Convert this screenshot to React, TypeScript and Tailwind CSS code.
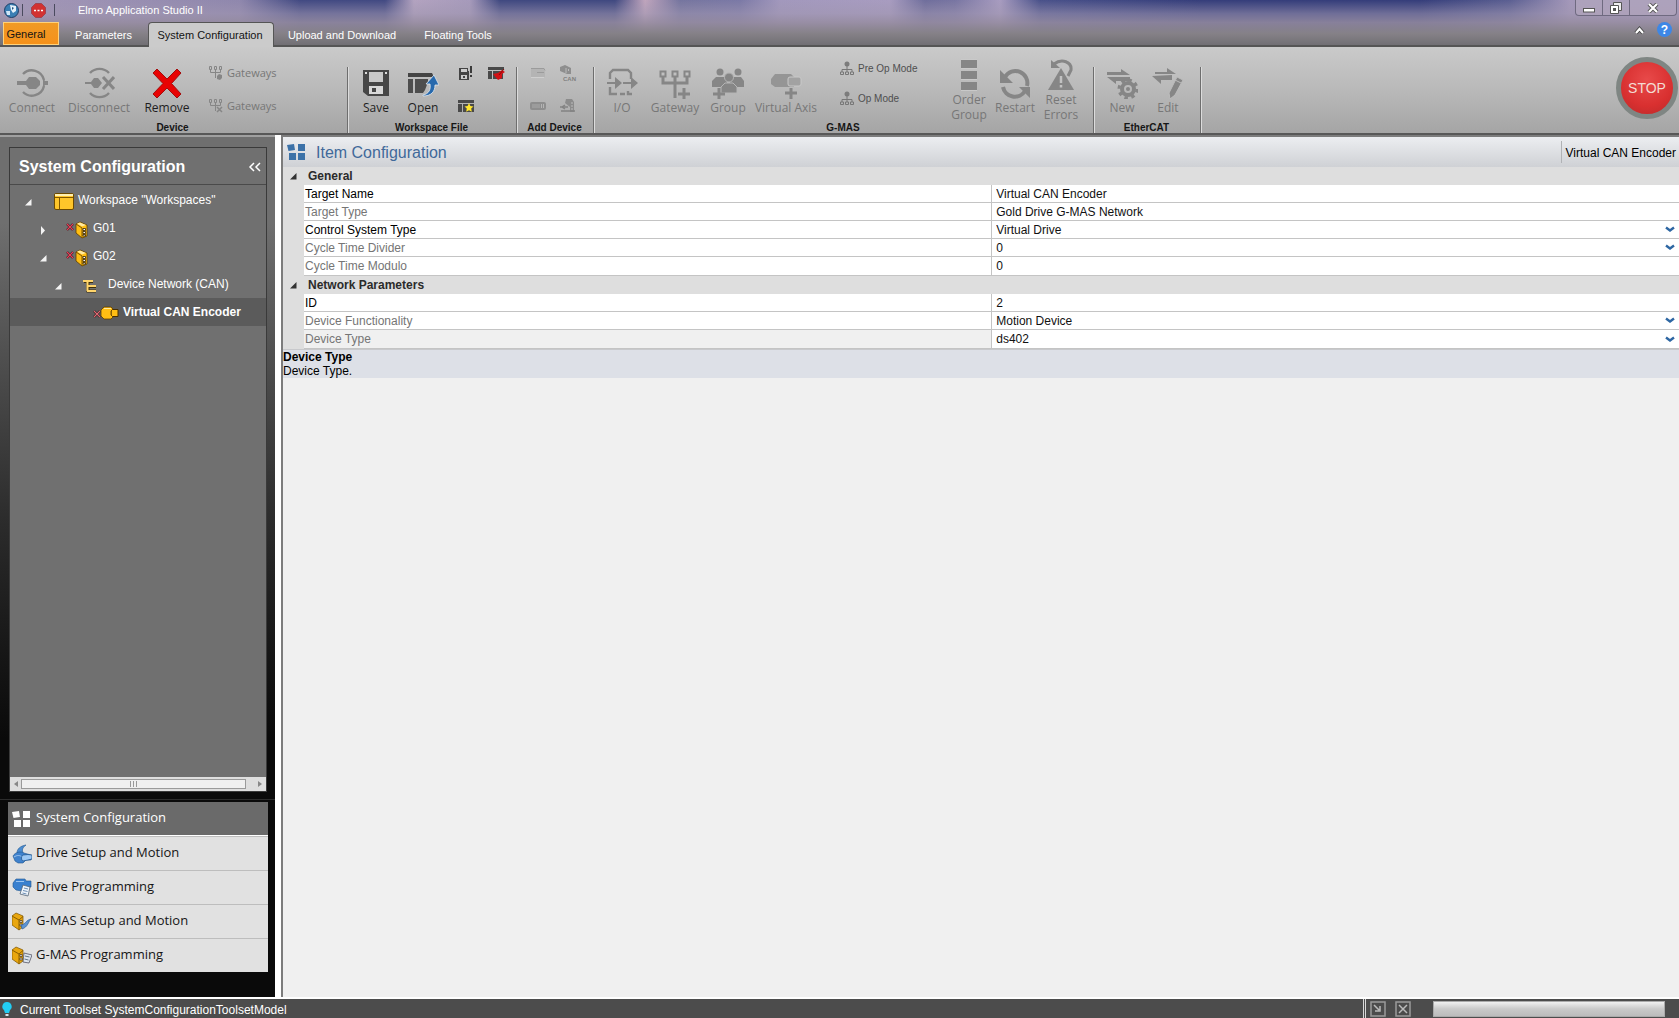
import React from "react";

type IconProps = { children: React.ReactNode; w?: number; h?: number; vb?: string };

const Svg = ({ children, w = 32, h = 32, vb = "0 0 32 32" }: IconProps) => (
  <svg width={w} height={h} viewBox={vb} fill="none" aria-hidden="true" className="shrink-0">
    {children}
  </svg>
);

const G = "#868686";

/* ---------- ribbon icons ---------- */
const ConnectIcon = () => (
  <Svg>
    <path d="M7 7a12.500 12.500 0 0 1 21 6M28 19a12.500 12.500 0 0 1-21 6" stroke={G} strokeWidth="2.4" />
    <path d="M27 10l2 4h3v4h-3l-2 4z" fill={G} />
    <path d="M1 14h9l3-4h7l4 4v4l-4 4h-7l-3-4H1z" fill={G} />
  </Svg>
);
const DisconnectIcon = () => (
  <Svg>
    <path d="M7 6a13 13 0 0 1 19 0M7 26a13 13 0 0 0 19 0" stroke={G} strokeWidth="2.4" />
    <path d="M2 15h6l3-4h4l4 5-4 5h-4l-3-4H2z" fill={G} />
    <path d="M20 10l11 12M31 10L20 22" stroke={G} strokeWidth="3" />
  </Svg>
);
const RemoveIcon = () => (
  <Svg>
    <path d="M6 2l10 10L26 2l4 4-9.500 10.500L30 27l-4 4-10-10L6 31l-4-4 10-10.500L2 6z" fill="#e80303" stroke="#a30d0d" strokeWidth="1" />
  </Svg>
);
const GatewaySmall = ({ x = false }: { x?: boolean }) => (
  <Svg w={16} h={16} vb="0 0 16 16">
    <path d="M1.500 1.500h2v3h-2zM6.500 1.500h2v3h-2zM11.500 1.500h2v3h-2zM2.500 4.500v3h10v-3M7.500 4.500V13" stroke={G} />
    {x ? <path d="M9 9l5 5M14 9l-5 5" stroke={G} strokeWidth="1.500" /> : <path d="M9 11l2-2 3 1v3l-2 2-3-1z" fill={G} />}
  </Svg>
);
const SaveIcon = () => (
  <Svg>
    <path d="M3 3h26v26H8l-5-4z" fill="#474747" />
    <path d="M9 5h14v10H9z" fill="#c9c9c9" />
    <path d="M5 5h2v2H5zM25 5h2v2h-2z" fill="#ddd" />
    <path d="M9 19h14v8H9z" fill="#d9d9d9" />
    <path d="M12 21h4v4h-4z" fill="#474747" />
  </Svg>
);
const OpenIcon = () => (
  <Svg>
    <path d="M1 6h24l2 4H1z" fill="#444" />
    <path d="M1 12h5v14H1zM8 12h13v3l-3 8-2 3H8z" fill="#4d4d4d" />
    <path d="M16 28c6-1 8-6 7-11h-4l8-9 5 10h-4c0 7-4 11-12 11z" fill="#2769ad" stroke="#e1e7ee" strokeWidth=".8" />
  </Svg>
);
const SaveAsIcon = () => (
  <Svg w={16} h={16} vb="0 0 16 16">
    <path d="M1 3h9v3h1v9H1z" fill="#444" />
    <path d="M3 4h6v3H3zM3 10h6v4H3z" fill="#ccc" />
    <path d="M5 11h2v2H5z" fill="#444" />
    <path d="M12 1h2v7h-3l-1 2V8h2z" fill="#3b3b3b" />
    <path d="M12 10h2v2h-2z" fill="#3b3b3b" />
  </Svg>
);
const ClearWsIcon = () => (
  <Svg w={17} h={16} vb="0 0 17 16">
    <path d="M0 2h16v3H0zM0 6h4v8H0zM5 6h10v8H5z" fill="#494949" />
    <path d="M14 5l3 2-3 2v4l-4 2-5-6 5-1z" fill="#d31015" />
    <path d="M16 4l-5 6" stroke="#8d0a0a" />
  </Svg>
);
const NewWsIcon = () => (
  <Svg w={17} h={16} vb="0 0 17 16">
    <path d="M0 2h16v3H0zM0 6h4v8H0zM5 6h11v8H5z" fill="#494949" />
    <path d="M11 5l1.400 3 3.100.4-2.300 2.200.6 3.200L11 12.300l-2.800 1.500.6-3.200L6.500 8.400l3.100-.4z" fill="#ffe52e" />
  </Svg>
);
const AddA = () => (
  <Svg w={16} h={16} vb="0 0 16 16">
    <path d="M1 4h13l1 3v5H1z" fill="#b4b4b4" />
    <path d="M1 3.500h13l1 2M7 7.500h7" stroke="#9b9b9b" />
    <path d="M1 12.500h13" stroke="#cfcfcf" />
  </Svg>
);
const AddB = () => (
  <Svg w={18} h={16} vb="0 0 18 16">
    <path d="M1 2l5-2 6 3v6H8L1 6z" fill="#8e8e8e" />
    <path d="M7 3v5M9.500 4v2" stroke="#bbb" />
    <text x="4" y="15.500" fontSize="6" fontFamily="Liberation Sans, sans-serif" fontWeight="700" fill="#808080">CAN</text>
  </Svg>
);
const AddC = () => (
  <Svg w={16} h={16} vb="0 0 16 16">
    <rect x="0" y="4" width="16" height="8" rx="2" fill="#8e8e8e" />
    <path d="M2 6h8v4H2z" fill="#9c9c9c" />
    <path d="M11 6h1v4h-1zM13 6h1v4h-1z" fill="#b5b5b5" />
  </Svg>
);
const AddD = () => (
  <Svg w={16} h={16} vb="0 0 16 16">
    <path d="M6 1h6l2 3v10h-4V9L5 5z" fill="#8c8c8c" />
    <path d="M11 5h2M11 8h2M11 11h2" stroke="#bbb" />
    <path d="M0 9h8M1 13h14M5 7L2 9l3 2" stroke="#838383" strokeWidth="1.500" />
  </Svg>
);
const IoIcon = () => (
  <Svg>
    <path d="M4 12V6l3-3h15l3 3v6M4 20v7h7M14 27h5M22 24v3h4" stroke={G} strokeWidth="2.400" />
    <path d="M1 15h8v-5l7 6-7 6v-5H1zM17 15h8v-5l7 6-7 6v-5h-8z" fill={G} />
  </Svg>
);
const GatewayIcon = () => (
  <Svg>
    <path d="M1.500 4.500h5v5h-5zM13.500 4.500h5v5h-5zM25.500 4.500h5v5h-5z" stroke={G} strokeWidth="2" />
    <path d="M4 10v6h24v-6M16 10v21" stroke={G} strokeWidth="3" />
    <path d="M25 21v11M19 27h12" stroke={G} strokeWidth="3" />
  </Svg>
);
const GroupIcon = () => (
  <Svg>
    <circle cx="8" cy="5" r="3.500" fill={G} />
    <circle cx="26" cy="5" r="3.500" fill={G} />
    <path d="M0 20v-6l4-4h8l3 4v6zM18 20v-6l4-4h7l3 4v6z" fill={G} />
    <circle cx="17" cy="10.500" r="4.500" fill={G} stroke="#b5b5b5" />
    <path d="M9 26v-6l4-4h8l4 4v6z" fill={G} stroke="#b5b5b5" />
    <path d="M7 21v11M1 27h12" stroke={G} strokeWidth="3" />
  </Svg>
);
const AxisIcon = () => (
  <Svg>
    <path d="M1 12l4-5h16l3 3v10H5l-4-3z" fill="#959595" />
    <rect x="18" y="10" width="13" height="9" rx="2" fill="#a2a2a2" stroke="#c9c9c9" />
    <path d="M21 21v11M15 26h12" stroke={G} strokeWidth="3" />
  </Svg>
);
const OpModeIcon = () => (
  <Svg w={16} h={16} vb="0 0 16 16">
    <circle cx="8" cy="4" r="2.500" fill="#7c7c7c" />
    <path d="M8 5v7M3 12V9.500h10V12" stroke="#777" />
    <path d="M1.500 12h3v2.500h-3zM6.500 12h3v2.500h-3zM11.500 12h3v2.500h-3z" stroke="#777" />
  </Svg>
);
const OrderIcon = () => (
  <Svg>
    <path d="M8 1h16v8H8zM8 12h16v8H8zM8 23h16v8H8z" fill={G} />
    <path d="M8 .5h16M8 9.500h16M8 20.500h16M8 31.500h16" stroke="#c9c9c9" />
  </Svg>
);
const RestartIcon = () => (
  <Svg>
    <path d="M6 10a12 12 0 0 1 22 9M26 24a12 12 0 0 1-22-4" stroke={G} strokeWidth="4" />
    <path d="M1 3v13h13zM31 31V20H20z" fill={G} />
  </Svg>
);
const ResetIcon = () => (
  <Svg>
    <path d="M9 5c8-6 18-2 17 6l-3 6" stroke={G} strokeWidth="3" />
    <path d="M6 1v8h9z" fill={G} />
    <path d="M16 9l13 22H3z" fill={G} />
    <path d="M16 17v7M16 26v2.500" stroke="#c2c2c2" strokeWidth="2.500" />
  </Svg>
);
const NewIcon = () => (
  <Svg>
    <path d="M1 5h14V2l9 6H1zM24 14H10v3L1 10h23z" fill={G} />
    <circle cx="22" cy="22" r="6" stroke={G} strokeWidth="4" />
    <circle cx="22" cy="22" r="9" stroke={G} strokeWidth="3" strokeDasharray="3.500 3.570" />
    <circle cx="22" cy="22" r="2" fill={G} />
  </Svg>
);
const EditIcon = () => (
  <Svg>
    <path d="M3 5h12V1l9 6H3zM20 13H9v4L0 9l20-1z" fill={G} />
    <path d="M25 10l6 3-8 15-5 4-1-6z" fill={G} stroke="#bcbcbc" />
    <path d="M23 13l6 3" stroke="#bcbcbc" />
  </Svg>
);

/* ---------- ribbon parts ---------- */
const BigButton = ({ icon, label, className, active = false, tall = false }: {
  icon: React.ReactNode; label: React.ReactNode; className: string; active?: boolean; tall?: boolean;
}) => (
  <button
    type="button"
    className={`flex shrink-0 flex-col items-center gap-px text-center text-[12px] whitespace-nowrap ${tall ? "pt-3 leading-[15px]" : "pt-5 leading-4"} ${active ? "text-[#1e1e1e]" : "text-[#777]"} ${className}`}
  >
    {icon}
    <span>{label}</span>
  </button>
);

const RibbonGroup = ({ title, children, className = "" }: { title: string; children: React.ReactNode; className?: string }) => (
  <section className={`flex shrink-0 ${className}`}>
    <div className="flex flex-1 flex-col">
      <div className="flex h-[75px]">{children}</div>
      <h3 className="pr-0.5 text-center font-[Liberation_Sans,sans-serif] text-[10px] leading-[11px] font-bold text-[#161616]">{title}</h3>
    </div>
    <div className="mt-5 w-0.5 border-l border-[#6e6e6e] bg-[#dcdcdc]" />
  </section>
);

const SmallButton = ({ icon, label, text = "" }: { icon: React.ReactNode; label: string; text?: string }) => (
  <button type="button" aria-label={label} className="flex h-4 items-center justify-center gap-[3px] whitespace-nowrap">
    {icon}
    {text && <span>{text}</span>}
  </button>
);

/* ---------- tree icons ---------- */
const Expanded = ({ color = "#f4f4f4" }: { color?: string }) => (
  <Svg w={7} h={7} vb="0 0 7 7"><path d="M6.500 0v6.500H0z" fill={color} /></Svg>
);
const Collapsed = () => (
  <Svg w={7} h={9} vb="0 0 7 9"><path d="M1 0l4 4.500L1 9z" fill="#f4f4f4" /></Svg>
);
const WorkspaceIcon = () => (
  <Svg w={20} h={17} vb="0 0 20 17">
    <rect x=".5" y=".5" width="19" height="16" rx="1.500" fill="#ffc62a" stroke="#6d4a00" />
    <path d="M1 2h18" stroke="#fff0b0" strokeWidth="2" />
    <path d="M1 4.500h18M5.500 4.500v12" stroke="#805700" />
  </Svg>
);
const GmasIcon = () => (
  <Svg w={22} h={18} vb="0 0 22 18">
    <path d="M1 3l6 6M7 3L1 9" stroke="#2b1b1b" strokeWidth="2.400" />
    <path d="M1 3l6 6M7 3L1 9" stroke="#e8405a" strokeWidth="1.300" />
    <path d="M10 3l4-2 7 3v11l-5 2-6-5z" fill="#ffbe13" stroke="#5d3d00" strokeWidth=".8" />
    <path d="M11 2.500l3-1 6 2.500-4 1.500z" fill="#ffe9a0" />
    <path d="M10 3l6 4v10" stroke="#7a5200" />
    <path d="M17 7.500h2.500v2H17zM17 10.500h2.500v2H17zM17 13.500h2.500v1.500H17z" fill="#fff" stroke="#332200" strokeWidth=".8" />
  </Svg>
);
const NetworkIcon = () => (
  <Svg w={14} h={14} vb="0 0 14 14">
    <path d="M1 2.500h9M5 3v9h8M5 7.500h8" stroke="#3e2f0a" strokeWidth="3" />
    <path d="M0 2h10M4.500 3v9M5 7h8M4 12h9" stroke="#ffd56b" strokeWidth="2" />
  </Svg>
);
const EncoderIcon = () => (
  <Svg w={26} h={14} vb="0 0 26 14">
    <path d="M1 5l6 6M7 5l-6 6" stroke="#241a1a" strokeWidth="2.400" />
    <path d="M1 5l6 6M7 5l-6 6" stroke="#e06a74" strokeWidth="1.100" />
    <path d="M18 3.500h7v7h-7z" fill="#ffbe13" stroke="#4a3000" />
    <path d="M8 4l3-3h7l2 2-2 2v4l2 2-2 2h-7l-3-3z" fill="#ffbe13" stroke="#5d3d00" strokeWidth=".8" />
    <path d="M11 2.500h7" stroke="#ffe9a0" />
  </Svg>
);
const BlocksIcon = ({ color }: { color: string }) => (
  <Svg w={20} h={18} vb="0 0 20 18">
    <path d="M0 2l7-1 1 6-6.500 1zM11 1h7v7h-7zM2 10h7v7H2zM11 10h7v7h-7z" fill={color} />
  </Svg>
);

const DriveSetupIcon = () => (
  <Svg w={20} h={20} vb="0 0 20 20">
    <path d="M5 9c0-4 3-7 9-8-4 3-4 5-3 8" fill="#4a8cd2" stroke="#1e558f" strokeWidth=".6" />
    <path d="M1 12c2-4 8-5 11-3l7 2v5h-5l-3 3H6l-3-2z" fill="#3f82cd" stroke="#1e558f" strokeWidth=".6" />
    <path d="M2 13c3-2 6-2 8 0" stroke="#9dc5ee" />
    <path d="M11 11c-2 1-2 5 0 6l5-1 4-1v-4l-4-.5z" fill="#9cc8f4" stroke="#1e558f" strokeWidth=".8" />
  </Svg>
);
const DriveProgIcon = () => (
  <Svg w={20} h={20} vb="0 0 20 20">
    <path d="M1 5l3-4h9l1 2h5v6h-6l-3 4-6-1-3-3z" fill="#3980cf" stroke="#1f568f" strokeWidth=".6" />
    <path d="M4 3.500h8" stroke="#9cc5f0" />
    <path d="M11 7l7 2-2 9-8-2z" fill="#eef4fb" stroke="#567" strokeWidth=".8" />
    <path d="M12 10l4 1M11 12.500l4.500 1M10.500 15l4 1" stroke="#6d8fb5" />
  </Svg>
);
const GmasNavIcon = ({ prog = false }: { prog?: boolean }) => (
  <Svg w={20} h={20} vb="0 0 20 20">
    <path d="M0 4l4-3 7 3v11l-4 3-7-5z" fill="#e9a70f" stroke="#7a5200" strokeWidth=".7" />
    <path d="M0 4l7 4v10M7 8l4-3.500" stroke="#8a5e00" />
    <path d="M8 8.500h2v2H8zM8 12h2v2H8z" fill="#fff" stroke="#432" strokeWidth=".7" />
    {prog ? (
      <>
        <path d="M12 7l8 2-3 8-6-1z" fill="#dde5ee" stroke="#556" strokeWidth=".8" />
        <path d="M13 10l4.500 1M12.500 13l4 1" stroke="#678" />
      </>
    ) : (
      <path d="M9 13c4 0 5-5 10-6-3 3-3 8-9 10z" fill="#5b93d3" stroke="#2c5f98" strokeWidth=".7" />
    )}
  </Svg>
);

/* ---------- property grid ---------- */
type Row = { name: string; value: string; dim?: boolean; select?: boolean; shaded?: boolean };

const general: Row[] = [
  { name: "Target Name", value: "Virtual CAN Encoder" },
  { name: "Target Type", value: "Gold Drive G-MAS Network", dim: true },
  { name: "Control System Type", value: "Virtual Drive", select: true },
  { name: "Cycle Time Divider", value: "0", dim: true, select: true },
  { name: "Cycle Time Modulo", value: "0", dim: true },
];
const network: Row[] = [
  { name: "ID", value: "2" },
  { name: "Device Functionality", value: "Motion Device", dim: true, select: true },
  { name: "Device Type", value: "ds402", dim: true, select: true, shaded: true },
];

const PropertySection = ({ title, rows }: { title: string; rows: Row[] }) => (
  <tbody>
    <tr className="h-[18px] bg-[#dedede]">
      <td><div className="flex justify-end pr-[7px]"><Expanded color="#333" /></div></td>
      <th colSpan={2} scope="colgroup" className="pl-1 text-left leading-4 font-bold text-[#2b2b2b]">{title}</th>
    </tr>
    {rows.map((r, i) => {
      const id = r.name.replace(/ /g, "-");
      return (
        <tr key={r.name} className={i === rows.length - 1 ? "h-[19px]" : "h-[18px]"}>
          <td className="bg-[#dedede]" />
          <th
            scope="row"
            className={`border-r border-b border-[#c4c4c4] pl-px text-left leading-4 font-normal ${r.dim ? "text-[#757575]" : "text-black"} ${r.shaded ? "bg-[#f0f0f0]" : "bg-white"}`}
          >
            <label htmlFor={id}>{r.name}</label>
          </th>
          <td className="border-b border-[#c4c4c4] bg-white">
            {r.select ? (
              <div className="relative flex items-center">
                <select id={id} defaultValue={r.value} className="block h-4 w-full appearance-none bg-transparent pl-1 leading-4 text-[#111] outline-none">
                  <option>{r.value}</option>
                </select>
                <span className="pointer-events-none absolute right-1">
                  <Svg w={10} h={7} vb="0 0 10 7"><path d="M1 1.500l4 3 4-3" stroke="#2e67a3" strokeWidth="2.400" /></Svg>
                </span>
              </div>
            ) : (
              <input id={id} type="text" defaultValue={r.value} readOnly={r.dim} className="block h-4 w-full bg-transparent pl-1 leading-4 text-[#111] outline-none" />
            )}
          </td>
        </tr>
      );
    })}
  </tbody>
);

const TreeRow = ({ className, arrow, icon, label, selected = false }: {
  className: string; arrow?: React.ReactNode; icon: React.ReactNode; label: string; selected?: boolean;
}) => (
  <li role="treeitem" aria-selected={selected} className={`flex h-7 items-center whitespace-nowrap ${selected ? "bg-[#5b5b5b] font-bold" : ""} ${className}`}>
    {arrow && <span className="mt-1 flex w-[7px] shrink-0">{arrow}</span>}
    {icon}
    <span>{label}</span>
  </li>
);

const NavItem = ({ icon, label, active = false }: { icon: React.ReactNode; label: string; active?: boolean }) => (
  <li>
    <button
      type="button"
      className={`flex h-[34px] w-full items-center gap-1 pl-1 text-left ${active ? "border-b border-white bg-[#6a6a6a] text-white" : "border-t border-[#bdbdbd] bg-[#e1e1e1] text-[#161616]"}`}
    >
      {icon}
      <span className="pb-1 leading-5">{label}</span>
    </button>
  </li>
);

export default function App() {
  return (
    <div className="flex h-screen w-full flex-col overflow-hidden bg-[#f0f0f0] font-[Liberation_Sans,Arial,sans-serif] text-[12px] text-black">
      {/* title bar and tab strip */}
      <header className="flex h-[47px] shrink-0 flex-col border-b-2 border-[#555] bg-[linear-gradient(to_bottom,transparent_0%,rgba(160,150,176,0.55)_30%,rgba(150,140,160,0.85)_50%,#858187_75%,#716f74_100%),linear-gradient(to_right,#a498b8_0,#8f87ad_240px,#414982_300px,#414982_385px,#b3a3c0_414px,#a69abb_470px,#3f4880_500px,#3f4880_615px,#c0a5bd_645px,#75759f_680px,#7b79a6_740px,#a298bd_780px,#a89cc0_890px,#6f6e9c_925px,#7875a2_955px,#a89cc0_1000px,#49518a_1040px,#343d7a_1200px,#343d7a_1420px,#5b5f92_1510px,#a498ba_1570px)] text-white">
        <div className="flex h-[22px] items-start">
          <div className="flex h-5 items-center pl-1">
            <Svg w={15} h={15} vb="0 0 15 15">
              <circle cx="7.500" cy="7.500" r="7" fill="#3b7fb4" stroke="#1f3f66" />
              <path d="M6 2l6 1v5l-3 2-2-3z" fill="#e6f2fa" />
              <path d="M2 8h4v4H3z" fill="#cfe6f6" />
              <path d="M8 4l2 1-2 2z" fill="#23527f" />
            </Svg>
            <span className="ml-[3px] h-3 w-px bg-[#4a4a5e]" />
            <button type="button" aria-label="Stop all" className="ml-2">
              <Svg w={15} h={15} vb="0 0 15 15">
                <path d="M4.500.5h6l4 4v6l-4 4h-6l-4-4v-6z" fill="#d23232" stroke="#a04450" />
                <path d="M3 7.500h2M6.500 7.500h2M10 7.500h2" stroke="#fff" strokeWidth="1.500" />
              </Svg>
            </button>
            <span className="ml-2 h-3 w-px bg-[#4a4a5e]" />
            <h1 className="ml-[23px] text-[11px] leading-4">Elmo Application Studio II</h1>
          </div>
          <div className="mr-0.5 ml-auto flex h-4 w-[102px] divide-x divide-[#6f6a80] rounded-b border border-t-0 border-[#6f6a80] bg-[#b4a9be]/60">
            <button type="button" aria-label="Minimize" className="flex flex-1 items-center justify-center pt-1">
              <Svg w={13} h={6} vb="0 0 13 6"><rect x=".5" y="1.500" width="11" height="3.500" fill="#fff" stroke="#555" /></Svg>
            </button>
            <button type="button" aria-label="Restore" className="flex flex-1 items-center justify-center">
              <Svg w={12} h={12} vb="0 0 12 12">
                <path d="M3.500.5h8v8h-8z" stroke="#555" fill="#eee" />
                <path d="M.5 3.500h8v8h-8z" stroke="#555" fill="#fff" />
                <path d="M3 6h3v3H3z" fill="#555" />
              </Svg>
            </button>
            <button type="button" aria-label="Close" className="flex w-[46px] items-center justify-center">
              <Svg w={12} h={10} vb="0 0 12 10">
                <path d="M2 1l8 8M10 1L2 9" stroke="#555" strokeWidth="4" />
                <path d="M2 1l8 8M10 1L2 9" stroke="#fff" strokeWidth="2.200" />
              </Svg>
            </button>
          </div>
        </div>
        <nav className="flex flex-1 items-stretch text-[11px] leading-4">
          <button type="button" className="ml-[3px] w-14 border border-[#ffd27a] bg-linear-to-b from-[#f09a25] to-[#f5911a] pr-2.5 text-center text-[#141414]">General</button>
          <button type="button" className="w-[89px] pt-0.5 text-center">Parameters</button>
          <button type="button" className="-mb-0.5 w-[126px] rounded-t border border-b-0 border-[#555] bg-[#cbcbcb] pr-0.5 text-center text-[#141414]">System Configuration</button>
          <button type="button" className="w-[136px] pt-0.5 text-center">Upload and Download</button>
          <button type="button" className="w-[96px] pt-0.5 text-center">Floating Tools</button>
          <div className="mr-[7px] ml-auto flex items-start gap-3">
            <button type="button" aria-label="Collapse ribbon" className="pt-1">
              <Svg w={11} h={9} vb="0 0 11 9">
                <path d="M2 7l3.500-4L9 7" stroke="#444" strokeWidth="4" />
                <path d="M2 7l3.500-4L9 7" stroke="#fff" strokeWidth="2.200" />
              </Svg>
            </button>
            <button type="button" aria-label="Help" className="flex h-[15px] w-[15px] items-center justify-center rounded-full bg-[#3d87e6] text-[12px] font-bold text-white">?</button>
          </div>
        </nav>
      </header>

      {/* ribbon */}
      <div className="flex h-[88px] shrink-0 border-b-2 border-[#585858] bg-linear-to-b from-[#cacaca] via-[#b9b9b9] to-[#a5a5a5] font-[Open_Sans,Noto_Sans,sans-serif]">
        <RibbonGroup title="Device" className="w-[349px]">
          <BigButton className="w-16" icon={<ConnectIcon />} label="Connect" />
          <BigButton className="w-[70px]" icon={<DisconnectIcon />} label="Disconnect" />
          <BigButton className="w-[66px]" active icon={<RemoveIcon />} label="Remove" />
          <div className="ml-2 flex flex-col gap-[17px] pt-[18px] text-[11px] text-[#777]">
            <SmallButton icon={<GatewaySmall />} label="Connect gateways" text="Gateways" />
            <SmallButton icon={<GatewaySmall x />} label="Disconnect gateways" text="Gateways" />
          </div>
        </RibbonGroup>
        <RibbonGroup title="Workspace File" className="w-[169px]">
          <BigButton className="ml-1 w-[46px]" active icon={<SaveIcon />} label="Save" />
          <BigButton className="w-12" active icon={<OpenIcon />} label="Open" />
          <div className="ml-1 grid grid-cols-[30px_30px] content-start gap-y-[17px] pt-[18px]">
            <SmallButton icon={<SaveAsIcon />} label="Save as" />
            <SmallButton icon={<ClearWsIcon />} label="Clear workspace" />
            <SmallButton icon={<NewWsIcon />} label="New workspace" />
          </div>
        </RibbonGroup>
        <RibbonGroup title="Add Device" className="w-[77px]">
          <div className="ml-[5px] grid grid-cols-[30px_30px] content-start gap-y-[17px] pt-[18px]">
            <SmallButton icon={<AddA />} label="Add drive" />
            <SmallButton icon={<AddB />} label="Add CAN device" />
            <SmallButton icon={<AddC />} label="Add module" />
            <SmallButton icon={<AddD />} label="Add network device" />
          </div>
        </RibbonGroup>
        <RibbonGroup title="G-MAS" className="w-[500px]">
          <BigButton className="ml-1 w-[46px]" icon={<IoIcon />} label="I/O" />
          <BigButton className="w-[60px]" icon={<GatewayIcon />} label="Gateway" />
          <BigButton className="w-[46px]" icon={<GroupIcon />} label="Group" />
          <BigButton className="w-[70px]" icon={<AxisIcon />} label="Virtual Axis" />
          <div className="ml-[18px] flex w-[107px] flex-col items-start gap-3.5 pt-[13px] font-[Liberation_Sans,sans-serif] text-[10px] text-[#4f4f4f]">
            <SmallButton icon={<OpModeIcon />} label="Pre Op Mode" text="Pre Op Mode" />
            <SmallButton icon={<OpModeIcon />} label="Op Mode" text="Op Mode" />
          </div>
          <BigButton tall className="w-[46px]" icon={<OrderIcon />} label={<>Order<br />Group</>} />
          <BigButton className="w-[46px]" icon={<RestartIcon />} label="Restart" />
          <BigButton tall className="w-[46px]" icon={<ResetIcon />} label={<>Reset<br />Errors</>} />
        </RibbonGroup>
        <RibbonGroup title="EtherCAT" className="w-[107px]">
          <BigButton className="ml-1 w-[46px]" icon={<NewIcon />} label="New" />
          <BigButton className="w-[46px]" icon={<EditIcon />} label="Edit" />
        </RibbonGroup>
        <div className="ml-auto flex items-start pt-2.5 pr-px">
          <button type="button" className="flex h-[62px] w-[62px] items-center justify-center rounded-full border-[5px] border-[#7f8683] bg-[radial-gradient(circle_at_50%_35%,#e84a4a,#d93030_60%,#b82a2a)] font-[Liberation_Sans,sans-serif] text-[14px] text-[#f3dcd4]">
            STOP
          </button>
        </div>
      </div>

      <div className="flex min-h-0 flex-1">
        {/* sidebar */}
        <aside className="flex w-[275px] shrink-0 flex-col border-t-2 border-[#a0a0a0] bg-linear-to-b from-[#6f6f6f] from-10% via-[#2b2b2b] via-45% to-[#0a0a0a] to-70% px-2 pt-2.5 pb-[25px]">
          <div className="ml-px flex min-h-0 flex-1 flex-col border border-[#3a3a3a] bg-[#707070] text-white">
            <div className="flex h-[37px] shrink-0 items-center justify-between border-b border-[#4a4a4a] pt-0.5 pr-1 pl-[9px]">
              <h2 className="text-[16px] leading-5 font-bold">System Configuration</h2>
              <button type="button" aria-label="Collapse panel">
                <Svg w={14} h={10} vb="0 0 14 10"><path d="M6 1L2 5l4 4M12 1L8 5l4 4" stroke="#fff" strokeWidth="1.500" /></Svg>
              </button>
            </div>
            <ul role="tree" className="flex-1 pt-px">
              <TreeRow className="pl-[15px] [&>svg]:mt-0.5 [&>svg]:mr-1 [&>svg]:ml-[22px]" arrow={<Expanded />} icon={<WorkspaceIcon />} label={'Workspace "Workspaces"'} />
              <TreeRow className="pl-[30px] [&>svg]:mt-1 [&>svg]:mr-[5px] [&>svg]:ml-[19px]" arrow={<Collapsed />} icon={<GmasIcon />} label="G01" />
              <TreeRow className="pl-[30px] [&>svg]:mt-1 [&>svg]:mr-[5px] [&>svg]:ml-[19px]" arrow={<Expanded />} icon={<GmasIcon />} label="G02" />
              <TreeRow className="pl-[45px] [&>svg]:mt-1 [&>svg]:mr-[11px] [&>svg]:ml-[21px]" arrow={<Expanded />} icon={<NetworkIcon />} label="Device Network (CAN)" />
              <TreeRow selected className="pl-[83px] [&>svg]:mt-0.5 [&>svg]:mr-1" icon={<EncoderIcon />} label="Virtual CAN Encoder" />
            </ul>
            <div className="flex h-[14px] shrink-0 items-center justify-between bg-[#dedede] px-1">
              <Svg w={4} h={6} vb="0 0 4 6"><path d="M4 0v6L0 3z" fill="#888" /></Svg>
              <div className="mr-3 ml-[3px] flex h-2.5 flex-1 items-center justify-center gap-0.5 border border-[#9a9a9a] bg-[#f0f0f0]">
                <span className="h-1.5 w-px bg-[#999]" />
                <span className="h-1.5 w-px bg-[#999]" />
                <span className="h-1.5 w-px bg-[#999]" />
              </div>
              <Svg w={4} h={6} vb="0 0 4 6"><path d="M0 0v6l4-3z" fill="#888" /></Svg>
            </div>
          </div>
          <div className="-mx-2 mt-1 h-1 shrink-0 border-b border-[#2c2c2c]" />
          <ul className="mt-0.5 -mr-px shrink-0 font-[Open_Sans,Noto_Sans,sans-serif] text-[13px]">
            <NavItem active icon={<BlocksIcon color="#fff" />} label="System Configuration" />
            <NavItem icon={<DriveSetupIcon />} label="Drive Setup and Motion" />
            <NavItem icon={<DriveProgIcon />} label="Drive Programming" />
            <NavItem icon={<GmasNavIcon />} label="G-MAS Setup and Motion" />
            <NavItem icon={<GmasNavIcon prog />} label="G-MAS Programming" />
          </ul>
        </aside>
        <div className="w-1.5 shrink-0 bg-white" />

        {/* item configuration */}
        <main className="flex min-w-0 flex-1 flex-col border-t-2 border-l-2 border-[#7c7c7c]">
          <div className="flex h-[30px] shrink-0 items-center bg-linear-to-b from-[#eceef1] to-[#cfd1d5] pl-1">
            <BlocksIcon color="#3c72a8" />
            <h2 className="ml-[9px] pt-0.5 text-[16px] leading-5 text-[#41699a]">Item Configuration</h2>
            <div className="ml-auto flex h-[22px] items-center border-l border-[#b0b2b5] pt-px pr-[3px] pl-1 leading-4">Virtual CAN Encoder</div>
          </div>
          <table className="w-full table-fixed border-separate border-spacing-0">
            <colgroup>
              <col className="w-[21px]" />
              <col className="w-[49.300%]" />
              <col />
            </colgroup>
            <PropertySection title="General" rows={general} />
            <PropertySection title="Network Parameters" rows={network} />
          </table>
          <div className="h-[29px] shrink-0 border-t border-[#c8c9cc] bg-[#dde0e7] leading-[14px]">
            <h3 className="font-bold">Device Type</h3>
            <p>Device Type.</p>
          </div>
        </main>
      </div>

      {/* status bar */}
      <footer className="flex h-[21px] shrink-0 items-center border-t-2 border-white bg-[#4c4c4c] text-white">
        <Svg w={14} h={16} vb="0 0 14 16">
          <path d="M7 1a4.500 4.500 0 0 1 3 8l-1 3H5L4 9a4.500 4.500 0 0 1 3-8z" fill="#22cdf3" />
          <path d="M5.500 13h3v2h-3z" fill="#d7e4ea" />
        </Svg>
        <span className="ml-1.5 pt-0.5 leading-4">Current Toolset SystemConfigurationToolsetModel</span>
        <span className="ml-auto h-full w-[3px] border-x border-[#d8d8d8]" />
        <button type="button" aria-label="Dock" className="ml-1">
          <Svg w={16} h={16} vb="0 0 16 16"><path d="M1 1h14v14H1z" stroke="#9a9a9a" strokeWidth="1.500" /><path d="M4 4l5 5M10 5v5H5" stroke="#bbb" strokeWidth="1.500" /></Svg>
        </button>
        <button type="button" aria-label="Clear" className="ml-[9px]">
          <Svg w={16} h={16} vb="0 0 16 16"><path d="M1 1h14v14H1z" stroke="#9a9a9a" strokeWidth="1.500" /><path d="M4 4l8 8M12 4l-8 8" stroke="#bbb" strokeWidth="1.500" /></Svg>
        </button>
        <div role="progressbar" aria-label="Progress" className="mr-3.5 ml-[22px] h-4 w-[232px] border border-[#aaa] bg-linear-to-b from-[#f0f0f0] via-[#c9c9c9] to-[#bcbcbc]" />
      </footer>
    </div>
  );
}
